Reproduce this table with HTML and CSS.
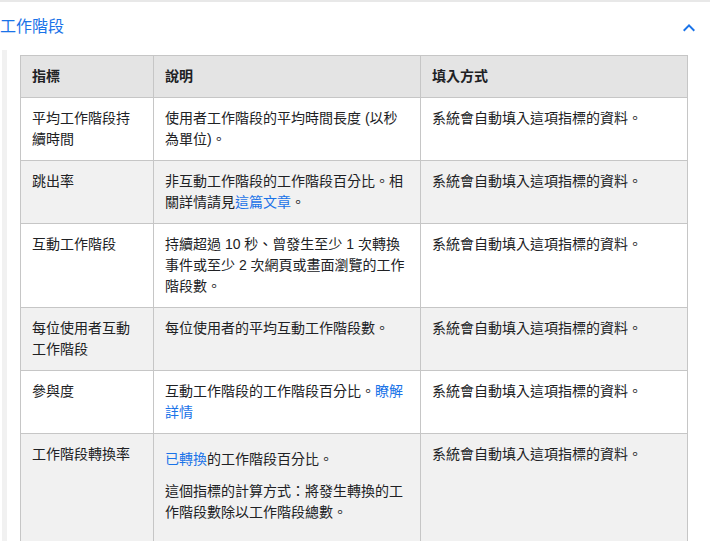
FILE: index.html
```html
<!DOCTYPE html>
<html lang="zh-Hant">
<head>
<meta charset="utf-8">
<link rel="stylesheet" href="styles.css">
</head>
<body>
<div class="divider"></div>
<section class="panel">
  <div class="panel-head">
    <h2 class="panel-title">工作階段</h2>
    <svg class="chevron" width="24" height="24" viewBox="0 0 24 24" aria-hidden="true"><path d="M12 8l-6 6 1.41 1.41L12 10.83l4.59 4.58L18 14z" fill="#1a73e8"/></svg>
  </div>
  <div class="panel-body">
    <table class="metrics">
      <colgroup>
        <col class="c1"><col class="c2"><col class="c3">
      </colgroup>
      <thead>
        <tr><th>指標</th><th>說明</th><th>填入方式</th></tr>
      </thead>
      <tbody>
        <tr>
          <td>平均工作階段持續時間</td>
          <td>使用者工作階段的平均時間長度 (以秒為單位)。</td>
          <td>系統會自動填入這項指標的資料。</td>
        </tr>
        <tr>
          <td>跳出率</td>
          <td>非互動工作階段的工作階段百分比。相關詳情請見<a href="#">這篇文章</a>。</td>
          <td>系統會自動填入這項指標的資料。</td>
        </tr>
        <tr>
          <td>互動工作階段</td>
          <td>持續超過 10 秒、曾發生至少 1 次轉換事件或至少 2 次網頁或畫面瀏覽的工作階段數。</td>
          <td>系統會自動填入這項指標的資料。</td>
        </tr>
        <tr>
          <td>每位使用者互動工作階段</td>
          <td>每位使用者的平均互動工作階段數。</td>
          <td>系統會自動填入這項指標的資料。</td>
        </tr>
        <tr>
          <td>參與度</td>
          <td>互動工作階段的工作階段百分比。<a href="#">瞭解詳情</a></td>
          <td>系統會自動填入這項指標的資料。</td>
        </tr>
        <tr>
          <td>工作階段轉換率</td>
          <td>
            <p class="p-first"><a href="#">已轉換</a>的工作階段百分比。</p>
            <p class="p-next">這個指標的計算方式：將發生轉換的工作階段數除以工作階段總數。</p>
          </td>
          <td>系統會自動填入這項指標的資料。</td>
        </tr>
      </tbody>
    </table>
  </div>
</section>
</body>
</html>
```

FILE: styles.css
```css
html, body {
  margin: 0;
  padding: 0;
  background: #ffffff;
}
body {
  font-family: "Liberation Sans", "Noto Sans CJK TC", sans-serif;
  color: #202124;
  overflow: hidden;
}
.divider {
  height: 2px;
  background: #e8e8e8;
}
.panel-head {
  height: 48px;
  display: flex;
  align-items: center;
  justify-content: space-between;
  padding-right: 9px;
}
.panel-title {
  margin: 0;
  font-size: 16px;
  font-weight: 400;
  color: #1a73e8;
  line-height: 24px;
  padding-top: 2px;
}
.chevron {
  display: block;
  margin-top: 4px;
}
.panel-body {
  margin-left: 2px;
  border-left: 5px solid #f1f1f1;
  padding: 5px 0 0 13px;
  min-height: 600px;
}
.metrics {
  border-collapse: collapse;
  table-layout: fixed;
  width: 667px;
  font-size: 14px;
  line-height: 21px;
}
.metrics .c1 { width: 133px; }
.metrics .c2 { width: 267px; }
.metrics .c3 { width: 267px; }
.metrics th,
.metrics td {
  border: 1px solid #c6c6c6;
  padding: 10px 13px 10px 11px;
  text-align: left;
  vertical-align: top;
}
.metrics th {
  background: #e4e4e4;
  font-weight: 700;
  color: #202124;
}
.metrics tbody tr:nth-child(even) td {
  background: #f1f1f1;
}
.metrics a {
  color: #1a73e8;
  text-decoration: none;
}
.metrics p {
  margin: 0;
}
.metrics .p-first {
  margin-top: 5px;
}
.metrics .p-next {
  margin-top: 11px;
  margin-bottom: 16px;
}
```
